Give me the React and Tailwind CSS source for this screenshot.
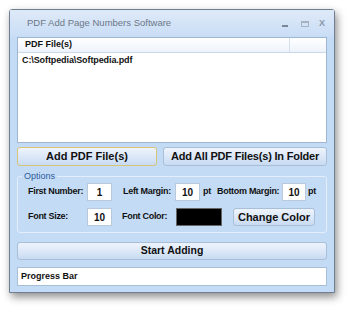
import React from 'react';

const font = { fontFamily: '"Liberation Sans", Arial, sans-serif' };

const Button = ({ children, className = '' }) => (
  <div
    className={`flex items-center justify-center whitespace-nowrap rounded-[3px] border border-[#a9bfd8] bg-gradient-to-b from-[#eef4fc] via-[#dce8f8] to-[#c8dbf2] font-bold text-[#111] ${className}`}
  >
    {children}
  </div>
);

const Field = ({ value, className = '' }) => (
  <div
    className={`flex h-[18px] shrink-0 items-center justify-center border border-[#b9c9dc] bg-white text-[10px] font-bold text-[#111] ${className}`}
  >
    {value}
  </div>
);

const Label = ({ children, className = '' }) => (
  <span className={`shrink-0 whitespace-nowrap text-[9px] font-bold tracking-[-0.3px] text-[#111] ${className}`}>
    {children}
  </span>
);

const App = () => {
  return (
    <div className="h-[309px] w-[350px] bg-white pl-[9px] pt-[9px]" style={font}>
      <div className="flex h-[284px] w-[326px] flex-col rounded-t-[3px] border border-[#6f7f93] bg-[#c4dbf6] shadow-[2px_4px_8px_rgba(0,0,0,0.45)]">
        {/* Title bar */}
        <div className="flex h-[27px] items-center bg-gradient-to-b from-[#dfeaf8] to-[#c8ddf6] pl-[17px] pr-[9px]">
          <span className="whitespace-nowrap text-[9.5px] text-[#6c7888]">PDF Add Page Numbers Software</span>
          <div className="ml-auto flex items-center text-[#8896a8]">
            <span className="mt-[4px] h-[2px] w-[6px] bg-[#7b8797]" />
            <span className="ml-[13px] h-[6px] w-[8px] border border-t-2 border-[#a6b2c0]" />
            <span className="ml-[10px] text-[9px] font-bold leading-none text-[#8a97a8]">X</span>
          </div>
        </div>

        <div className="flex flex-1 flex-col px-[7px]">
          {/* File list */}
          <div className="h-[106px] border border-[#9fb6d2] bg-white">
            <div className="flex h-[15px] items-center border-b border-[#c8d8ea] bg-gradient-to-b from-[#ffffff] to-[#eef3fa]">
              <span className="w-[271px] pl-[7px] text-[9px] font-bold text-[#111]">PDF File(s)</span>
              <span className="h-full w-px bg-[#d4e0ee]" />
            </div>
            <div className="pl-[4px] pt-[1px] text-[9px] font-bold tracking-[-0.1px] text-[#111]">C:\Softpedia\Softpedia.pdf</div>
          </div>

          {/* Add buttons */}
          <div className="mt-[4px] flex gap-[6px]">
            <Button className="h-[19px] w-[140px] border-[#d8c47a] text-[11px]">Add PDF File(s)</Button>
            <Button className="h-[19px] w-[164px] text-[11px] tracking-[-0.2px]">Add All PDF Files(s) In Folder</Button>
          </div>

          {/* Options */}
          <div className="relative mt-[10px] h-[57px] rounded-[3px] border border-[#e4eefa] pl-[10px] pt-[6px]">
            <span className="absolute -top-[7px] left-[4px] bg-[#c4dbf6] px-[2px] text-[9px] text-[#2e5c9a]">
              Options
            </span>
            <div className="flex items-center">
              <Label className="w-[59px]">First Number:</Label>
              <Field value="1" className="w-[25px]" />
              <Label className="ml-[11px] w-[52px]">Left Margin:</Label>
              <Field value="10" className="w-[25px]" />
              <Label className="ml-[3px] w-[14px]">pt</Label>
              <Label className="w-[65px]">Bottom Margin:</Label>
              <Field value="10" className="w-[24px]" />
              <Label className="ml-[2px]">pt</Label>
            </div>
            <div className="mt-[7px] flex items-center">
              <Label className="w-[59px]">Font Size:</Label>
              <Field value="10" className="w-[25px]" />
              <Label className="ml-[10px] w-[54px]">Font Color:</Label>
              <div className="h-[18px] w-[46px] shrink-0 border border-[#666] bg-black" />
              <Button className="ml-[11px] h-[18px] w-[82px] shrink-0 text-[11px]">Change Color</Button>
            </div>
          </div>

          {/* Start */}
          <Button className="mt-[9px] h-[18px] w-full text-[10.5px]">Start Adding</Button>

          {/* Progress */}
          <div className="mt-[7px] flex h-[19px] items-center border border-[#a9bfd8] bg-white pl-[3px] text-[9px] font-bold text-[#111]">
            Progress Bar
          </div>
        </div>
      </div>
    </div>
  );
};

export default App;
